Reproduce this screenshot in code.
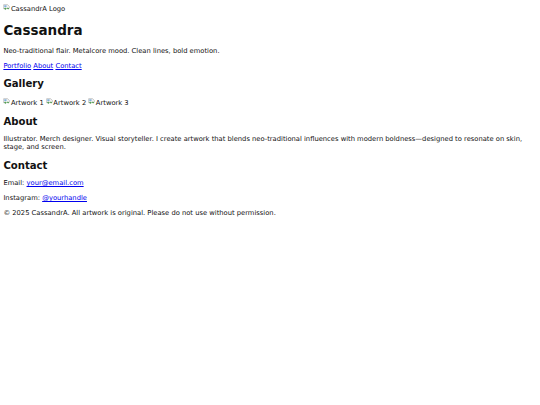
import React from 'react';

function BrokenImg({ alt }: { alt: string }) {
  return (
    <span className="inline-block">
      <svg width="7" height="7" viewBox="0 0 16 16" className="mr-[0.5px] inline-block align-[-0.5px]">
        <path d="M1.5 1.5h9l4 4v4l-3 2-3-2-3 3-3-2-1 1z" fill="#f4f4f4" stroke="#a0a0a0" strokeWidth="1.2" />
        <path d="M2 11l3-3 3 3 3-3 3 2v1l-2 1-3-2-3 3-3-2z" fill="#4f9f4f" />
        <path d="M3 3h5v4H3z" fill="#7fb0df" />
      </svg>
      {alt}
    </span>
  );
}

export default function App() {
  return (
    <div className="m-[3.375px] text-[6.75px] leading-[8.2px] text-[#111]" style={{ fontFamily: '"DejaVu Sans", sans-serif' }}>
      <header>
        <div className="py-[0.25px]">
          <BrokenImg alt="CassandrA Logo" />
        </div>
        <h1 className="my-[9.05px] text-[13.5px] font-bold leading-[normal]">Cassandra</h1>
        <p className="my-[6.75px]">Neo-traditional flair. Metalcore mood. Clean lines, bold emotion.</p>
        <nav>
          <a href="#portfolio" className="text-[#0000ee] underline">Portfolio</a>{' '}
          <a href="#about" className="text-[#0000ee] underline">About</a>{' '}
          <a href="#contact" className="text-[#0000ee] underline">Contact</a>
        </nav>
      </header>
      <section id="portfolio">
        <h2 className="my-[8.4px] text-[10.125px] font-bold leading-[normal]">Gallery</h2>
        <div className="py-[0.5px]">
          <BrokenImg alt="Artwork 1" />{' '}
          <BrokenImg alt="Artwork 2" />{' '}
          <BrokenImg alt="Artwork 3" />
        </div>
      </section>
      <section id="about">
        <h2 className="my-[8.4px] text-[10.125px] font-bold leading-[normal]">About</h2>
        <p className="my-[6.75px]">
          Illustrator. Merch designer. Visual storyteller. I create artwork that blends neo-traditional influences with modern boldness—designed to resonate on skin, stage, and screen.
        </p>
      </section>
      <section id="contact">
        <h2 className="my-[8.4px] text-[10.125px] font-bold leading-[normal]">Contact</h2>
        <p className="my-[6.75px]">Email: <a href="#" className="text-[#0000ee] underline">your@email.com</a></p>
        <p className="my-[6.75px]">Instagram: <a href="#" className="text-[#0000ee] underline">@yourhandle</a></p>
      </section>
      <footer>
        <p className="my-[6.75px]">© 2025 CassandrA. All artwork is original. Please do not use without permission.</p>
      </footer>
    </div>
  );
}
